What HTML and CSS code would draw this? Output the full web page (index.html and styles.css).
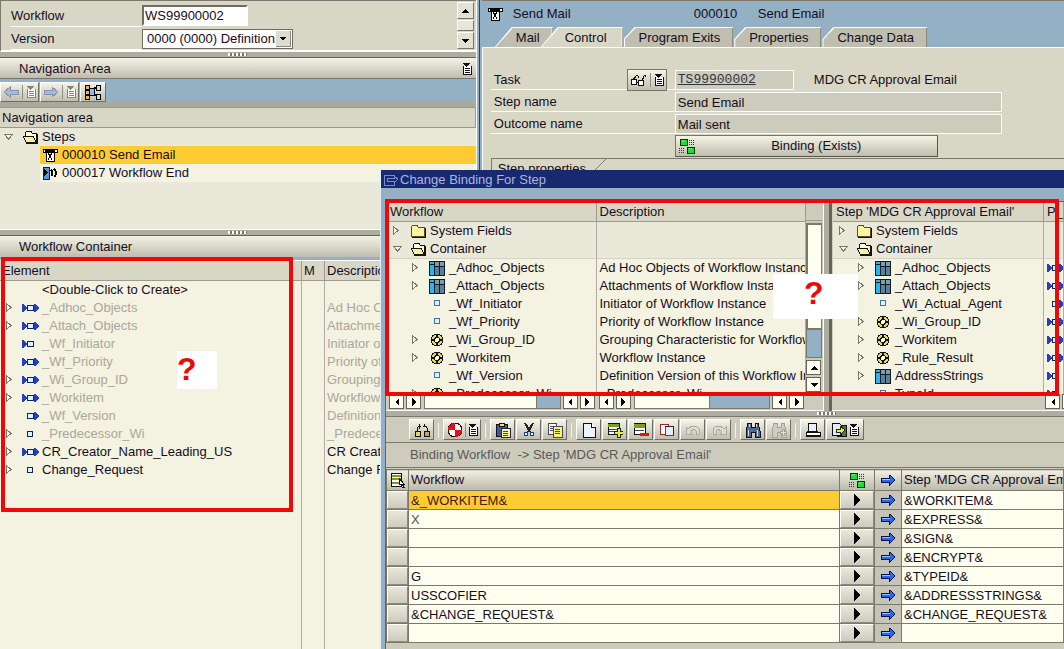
FILE: index.html
```html
<!DOCTYPE html>
<html lang="en">
<head>
<meta charset="utf-8">
<title>Change Binding For Step</title>
<link rel="stylesheet" href="styles.css">
</head>
<body>
<svg class="sprite" aria-hidden="true">
  <symbol id="right" viewBox="0 0 8 12"><path d="M1 1v9L6 5.500z" fill="#f7f6e6" stroke="#77776b"/></symbol>
  <symbol id="down" viewBox="0 0 12 12"><path d="M1 3h9L5.500 8z" fill="#f7f6e6" stroke="#77776b"/></symbol>
  <symbol id="folder" viewBox="0 0 16 14"><path d="M1 12V3l2-2h4l1 2h6v9z" fill="#fdf3a0" stroke="#55502a"/><path d="M2 13h13V4" fill="none" stroke="#111" /></symbol>
  <symbol id="open" viewBox="0 0 16 14"><path d="M3 6V3l2-2h4l1 2h4v9" fill="#fffde0" stroke="#111"/><path d="M1 6h10l3 6H4z" fill="#fdf090" stroke="#111"/><path d="M4 13h11V4" fill="none" stroke="#111"/></symbol>
  <symbol id="mail" viewBox="0 0 16 14"><path d="M1 1h14v3H1z" fill="#fff" stroke="#000"/><path d="M3 3h10" stroke="#000" stroke-width="2"/><path d="M4 4h8v9H4z" fill="#fff" stroke="#000"/><path d="M6 5l2 3 2-3M6 12l2-4 2 4" fill="none" stroke="#000"/></symbol>
  <symbol id="end" viewBox="0 0 16 14"><path d="M1 1h6v12H1z" fill="#5a93e0" stroke="#123"/><path d="M2 3v7l4-3z" fill="#000"/><path d="M9 4q3 3 0 6M12 3q4 4 0 8" fill="none" stroke="#000" stroke-width="2"/></symbol>
  <symbol id="grid" viewBox="0 0 16 15"><path d="M0 0h16v15H0z" fill="#0a1c26"/><path d="M1 1h4v2H1zM1 4h4v10H1z" fill="#2bb5ef"/><path d="M6 1h4v4H6zM11 1h4v4h-4z" fill="#7d9cae"/><path d="M6 6h4v8H6zM11 6h4v8h-4z" fill="#5f7f92"/></symbol>
  <symbol id="wheel" viewBox="0 0 14 14"><circle cx="7" cy="7" r="6" fill="#e9df4d" stroke="#111"/><path d="M7 1v12M1 7h12" stroke="#111" stroke-width="2"/><circle cx="7" cy="7" r="3" fill="#111"/><circle cx="7" cy="7" r="2" fill="#fff"/></symbol>
  <symbol id="sq" viewBox="0 0 16 14"><path d="M5 3h5v5H5z" fill="#e4f4ff" stroke="#3a72b8"/></symbol>
  <symbol id="io" viewBox="0 0 17 10"><path d="M0 1h1l4 4-4 4H0zM12 1h1l4 4-4 4h-1z" fill="#2a3cc0"/><path d="M5 2h7v6H5z" fill="#10264a"/><path d="M6 3h5v4H6z" fill="#d9f4ff"/></symbol>
  <symbol id="in" viewBox="0 0 17 10"><path d="M0 1h1l4 4-4 4H0z" fill="#2a3cc0"/><path d="M5 2h7v6H5z" fill="#10264a"/><path d="M6 3h5v4H6z" fill="#d9f4ff"/></symbol>
  <symbol id="out" viewBox="0 0 17 10"><path d="M12 1h1l4 4-4 4h-1z" fill="#2a3cc0"/><path d="M5 2h7v6H5z" fill="#10264a"/><path d="M6 3h5v4H6z" fill="#d9f4ff"/></symbol>
  <symbol id="none" viewBox="0 0 17 10"><path d="M5 2h6v6H5z" fill="#10264a"/><path d="M6 3h4v4H6z" fill="#d9f4ff"/></symbol>
  <symbol id="list" viewBox="0 0 10 12"><path d="M1 3v8h8V3" fill="#fff" stroke="currentColor"/><path d="M0 0h8L4 4zM3 5h5v1H3zM3 7h5v1H3zM3 9h5v1H3z" fill="currentColor"/></symbol>
  <symbol id="back" viewBox="0 0 16 12"><path d="M1 6l6-5v3h8v4H7v3z" fill="#a9b9d6" stroke="#8592b3"/></symbol>
  <symbol id="fwd" viewBox="0 0 16 12"><path d="M15 6L9 1v3H1v4h8v3z" fill="#a9b9d6" stroke="#8592b3"/></symbol>
  <symbol id="tree" viewBox="0 0 18 16"><path d="M1 1h4v4H1zM1 6h4v4H1zM1 11h4v4H1z" fill="#e9b84b" stroke="#000"/><path d="M5 4h5v7H5z" fill="#93b8ee" stroke="#000"/><path d="M10 4h2M10 11h2" stroke="#000" stroke-width="2"/><path d="M12 1h4v5h-4zM12 10h4v5h-4z" fill="#c9daf5" stroke="#000"/></symbol>
  <symbol id="glasses" viewBox="0 0 17 14"><path d="M2 8l5-6 1 1v2M12 8l2-5 1-1 1 2" fill="none" stroke="#111"/><circle cx="4" cy="9" r="3" fill="#fff" stroke="#111"/><circle cx="11" cy="10" r="3" fill="#fff" stroke="#111"/><path d="M7 9h1" stroke="#111"/></symbol>
  <symbol id="bind" viewBox="0 0 16 16"><path d="M1 1h7v6H1zM8 9h7v6H8z" fill="#19df35" stroke="#06370c"/><path d="M3 2l1 2 2-2M10 10l1 2 2-2" fill="none" stroke="#5cf56c"/><path d="M10 2h6M10 4h6M10 6h6M0 10h6M0 12h6M0 14h6" stroke="#333" stroke-dasharray="1 1"/></symbol>
  <symbol id="dlg" viewBox="0 0 16 12"><path d="M11 9v2H1V1h10v2M4 4h7V2l4 3-4 4V7H4z" fill="none" stroke="#7789cf"/></symbol>
  <symbol id="arrow" viewBox="0 0 16 12"><path d="M1 4h8V1h1l5 5-5 5H9V8H1z" fill="#2468ee" stroke="#04103f"/><path d="M2 5h8" stroke="#8fc8ff"/></symbol>
  <symbol id="link" viewBox="0 0 16 16"><path d="M1 9h5v5H1z" fill="#f0d060" stroke="#111"/><path d="M10 9h5v5h-5z" fill="#b8ab5c" stroke="#111"/><path d="M3 9V6l2-2h2M9 4h3l1 2v3M5 2v5M10 2v3" fill="none" stroke="#111"/></symbol>
  <symbol id="check" viewBox="0 0 16 16"><circle cx="8" cy="8" r="7" fill="#fff" stroke="#400"/><path d="M8 8V1a7 7 0 0 0-7 7zM8 8v7a7 7 0 0 0 7-7z" fill="#e0101c"/></symbol>
  <symbol id="paste" viewBox="0 0 16 16"><path d="M1 2h11v12H1z" fill="#3c5aa8" stroke="#111"/><path d="M4 1h5v3H4z" fill="#f3e36a" stroke="#111"/><path d="M6 6h9v9H6z" fill="#fbf49a" stroke="#224"/><path d="M8 9h5M8 11h5M8 13h5" stroke="#445"/></symbol>
  <symbol id="cut" viewBox="0 0 14 16"><path d="M3 1l5 9M11 1L6 10" stroke="#222" stroke-width="2"/><circle cx="4" cy="12" r="2" fill="#dfe" stroke="#1e3d9b"/><circle cx="10" cy="12" r="2" fill="#dfe" stroke="#1e3d9b"/></symbol>
  <symbol id="copy" viewBox="0 0 16 16"><path d="M1 1h8v11H1z" fill="#fffbd0" stroke="#446"/><path d="M3 4h3M3 6h3M3 8h3" stroke="#446"/><path d="M6 4h9v11H6z" fill="#fbf16a" stroke="#446"/><path d="M8 7h5M8 9h5M8 11h5" stroke="#446"/></symbol>
  <symbol id="page" viewBox="0 0 14 16"><path d="M1 1h8l4 4v10H1z" fill="#eaf3ff" stroke="#111"/><path d="M9 1v4h4" fill="#fff" stroke="#111"/></symbol>
  <symbol id="ins" viewBox="0 0 16 16"><path d="M1 1h11v11H1z" fill="#fff" stroke="#111"/><path d="M1 2h11v3H1z" fill="#7a9e26"/><path d="M2 7h9M2 9h9" stroke="#345"/><path d="M10 6h3v3h3v3h-3v3h-3v-3H7V9h3z" fill="#e8ee3c" stroke="#222"/></symbol>
  <symbol id="del" viewBox="0 0 16 16"><path d="M1 1h11v11H1z" fill="#fff" stroke="#111"/><path d="M1 2h11v4H1z" fill="#7a9e26"/><path d="M2 8h9" stroke="#345"/><path d="M7 11h9v3H7z" fill="#e01515"/></symbol>
  <symbol id="dup" viewBox="0 0 16 16"><path d="M1 2h8v10H1z" fill="#fff" stroke="#a22"/><path d="M6 4h8v9H6z" fill="#e7ecfb" stroke="#a22"/><path d="M6 4h8v9" fill="none" stroke="#223"/></symbol>
  <symbol id="undo" viewBox="0 0 16 14"><path d="M1 11V4l2 2q6-6 11 0v5l-3 1V8q-3-3-6 1l2 2z" fill="#dddccf" stroke="#a9a899"/></symbol>
  <symbol id="redo" viewBox="0 0 16 14"><path d="M15 11V4l-2 2Q7 0 2 6v5l3 1V8q3-3 6 1l-2 2z" fill="#dddccf" stroke="#a9a899"/></symbol>
  <symbol id="find" viewBox="0 0 16 16"><path d="M3 1h3v4h4V1h3l2 8v6h-5v-5H6v5H1V9z" fill="#52688f" stroke="#111"/><path d="M3 8v6M12 8v6M4 2v3M11 2v3" stroke="#c6d3ea"/></symbol>
  <symbol id="next" viewBox="0 0 16 16"><path d="M3 1h3v4h4V1h3l2 8v6h-5v-5H6v5H1V9z" fill="#cfcec2" stroke="#a3a294"/><path d="M11 7h2v2h2v2h-2v2h-2v-2H9V9h2z" fill="#e6e5d8" stroke="#a3a294"/></symbol>
  <symbol id="print" viewBox="0 0 16 16"><path d="M4 1h7l1 8H3z" fill="#e6efff" stroke="#111"/><path d="M1 10h14v4H1z" fill="#fff" stroke="#111"/><path d="M1 14h14" stroke="#111" stroke-width="2"/></symbol>
  <symbol id="export" viewBox="0 0 16 16"><path d="M6 3h9v11H6z" fill="#447a36" stroke="#111"/><path d="M1 1h7l2 2v10H1z" fill="#dfeaff" stroke="#111"/><path d="M5 7h4V4l5 4-5 5v-3H5z" fill="#f2ee3a" stroke="#222"/></symbol>
  <symbol id="sel" viewBox="0 0 16 16"><path d="M1 1h10v13H1z" fill="#fff" stroke="#111"/><path d="M2 3h9v2H2zM2 6h9v2H2zM2 10h9v2H2z" fill="#7d9a25"/><path d="M9 6l5 6h-2l2 3h-2l-1-3-2 1z" fill="#fff" stroke="#111"/></symbol>
  <symbol id="tl" viewBox="0 0 6 8"><path d="M5 0v8L1 4z"/></symbol>
  <symbol id="tr" viewBox="0 0 6 8"><path d="M1 0v8l4-4z"/></symbol>
  <symbol id="play" viewBox="0 0 6 12"><path d="M0 0v12l6-6z"/></symbol>
  <symbol id="tu" viewBox="0 0 8 6"><path d="M0 5h8L4 1z"/></symbol>
  <symbol id="td" viewBox="0 0 8 6"><path d="M0 1h8L4 5z"/></symbol>
</svg>

<div class="app">
  <aside class="left">
    <section class="head">
      <form class="headform">
        <label class="lab" for="wf">Workflow</label><input class="wf" id="wf" value="WS99900002">
        <label class="lab" for="ver">Version</label>
        <span class="selectbox"><select class="ver" id="ver"><option>0000 (0000) Definition</option></select><svg class="selarrow" width="8" height="6"><use href="#td"/></svg></span>
      </form>
      <div class="headscroll">
        <button class="sb" aria-label="Scroll up"><svg width="8" height="6"><use href="#tu"/></svg></button>
        <span class="knob"></span>
        <button class="sb" aria-label="Scroll down"><svg width="8" height="6"><use href="#td"/></svg></button>
      </div>
    </section>
    <div class="split"><i class="dots"></i></div>
    <h2 class="bar">Navigation Area<svg width="10" height="12"><use href="#list"/></svg></h2>
    <div class="navtools">
      <button class="tb dim" aria-label="Back"><svg width="16" height="12"><use href="#back"/></svg><i class="vr"></i><svg width="10" height="12"><use href="#list"/></svg></button>
      <button class="tb dim" aria-label="Forward"><svg width="16" height="12"><use href="#fwd"/></svg><i class="vr"></i><svg width="10" height="12"><use href="#list"/></svg></button>
      <button class="tb sq" aria-label="Hierarchy"><svg width="18" height="16"><use href="#tree"/></svg></button>
    </div>
    <section class="nav">
      <div class="navhead">Navigation area</div>
      <div class="cell top"><button class="exp" aria-label="Collapse"><svg width="12" height="12"><use href="#down"/></svg></button><svg width="16" height="14"><use href="#open"/></svg>Steps</div>
      <div class="cell step on"><svg width="16" height="14"><use href="#mail"/></svg>000010 Send Email</div>
      <div class="cell step"><svg width="16" height="14"><use href="#end"/></svg>000017 Workflow End</div>
    </section>
    <div class="split"><i class="dots"></i></div>
    <h2 class="bar cont">Workflow Container</h2>
    <section class="container">
      <table class="tree elements">
        <colgroup><col class="c-el"><col class="c-m"><col></colgroup>
        <thead><tr><th>Element</th><th>M</th><th>Description</th></tr></thead>
        <tbody>
        <tr><td><div class="cell"><i class="exp"></i><i class="gap"></i>&lt;Double-Click to Create&gt;</div></td><td></td><td></td></tr>
        <tr class="off"><td><div class="cell"><button class="exp" aria-label="Expand"><svg width="8" height="12"><use href="#right"/></svg></button><svg width="17" height="10"><use href="#io"/></svg>_Adhoc_Objects</div></td><td></td><td>Ad Hoc Objects of Workflow Instance</td></tr>
        <tr class="off"><td><div class="cell"><button class="exp" aria-label="Expand"><svg width="8" height="12"><use href="#right"/></svg></button><svg width="17" height="10"><use href="#io"/></svg>_Attach_Objects</div></td><td></td><td>Attachments of Workflow Instance</td></tr>
        <tr class="off"><td><div class="cell"><i class="exp"></i><svg width="17" height="10"><use href="#in"/></svg>_Wf_Initiator</div></td><td></td><td>Initiator of Workflow Instance</td></tr>
        <tr class="off"><td><div class="cell"><i class="exp"></i><svg width="17" height="10"><use href="#io"/></svg>_Wf_Priority</div></td><td></td><td>Priority of Workflow Instance</td></tr>
        <tr class="off"><td><div class="cell"><button class="exp" aria-label="Expand"><svg width="8" height="12"><use href="#right"/></svg></button><svg width="17" height="10"><use href="#io"/></svg>_Wi_Group_ID</div></td><td></td><td>Grouping Characteristic for Workflow</td></tr>
        <tr class="off"><td><div class="cell"><button class="exp" aria-label="Expand"><svg width="8" height="12"><use href="#right"/></svg></button><svg width="17" height="10"><use href="#io"/></svg>_Workitem</div></td><td></td><td>Workflow Instance</td></tr>
        <tr class="off"><td><div class="cell"><i class="exp"></i><svg width="17" height="10"><use href="#out"/></svg>_Wf_Version</div></td><td></td><td>Definition Version of this Workflow</td></tr>
        <tr class="off"><td><div class="cell"><button class="exp" aria-label="Expand"><svg width="8" height="12"><use href="#right"/></svg></button><svg width="17" height="10"><use href="#none"/></svg>_Predecessor_Wi</div></td><td></td><td>_Predecessor_Wi</td></tr>
        <tr><td><div class="cell"><button class="exp" aria-label="Expand"><svg width="8" height="12"><use href="#right"/></svg></button><svg width="17" height="10"><use href="#io"/></svg>CR_Creator_Name_Leading_US</div></td><td></td><td>CR Creator</td></tr>
        <tr><td><div class="cell"><button class="exp" aria-label="Expand"><svg width="8" height="12"><use href="#right"/></svg></button><svg width="17" height="10"><use href="#none"/></svg>Change_Request</div></td><td></td><td>Change Request</td></tr>
        <tr class="fill"><td></td><td></td><td></td></tr>
        </tbody>
      </table>
    </section>
  </aside>

  <main class="right">
    <header class="stephead"><svg width="16" height="14"><use href="#mail"/></svg><span class="kind">Send Mail</span><span class="num">000010</span><span>Send Email</span></header>
    <nav class="tabs">
      <button class="tab first">Mail</button><button class="tab cur">Control</button><button class="tab">Program Exits</button><button class="tab">Properties</button><button class="tab">Change Data</button>
    </nav>
    <section class="panel">
      <div class="line"><div class="lab task"><span>Task</span><button class="tb look" aria-label="Display task"><svg width="17" height="14"><use href="#glasses"/></svg><i class="vr"></i><svg width="10" height="12"><use href="#list"/></svg></button></div><a class="field id" href="#">TS99900002</a><span class="note">MDG CR Approval Email</span></div>
      <div class="line"><label class="lab" for="sn">Step name</label><input class="field" id="sn" value="Send Email" readonly></div>
      <div class="line"><label class="lab" for="on">Outcome name</label><input class="field" id="on" value="Mail sent" readonly></div>
      <div class="line"><span class="lab bare"></span><button class="binding"><svg width="16" height="16"><use href="#bind"/></svg><span>Binding (Exists)</span></button></div>
      <div class="group"><span class="legend">Step properties</span></div>
    </section>
  </main>

  <div class="dialog" role="dialog" aria-labelledby="dt">
    <h1 class="title" id="dt"><svg width="16" height="12"><use href="#dlg"/></svg>Change Binding For Step</h1>
    <div class="dbody">
      <div class="panes">
        <section class="pane">
          <div class="view">
            <table class="tree">
              <thead><tr><th>Workflow</th><th>Description</th></tr></thead>
              <tbody>
              <tr class="root"><td><div class="cell"><button class="exp" aria-label="Expand"><svg width="8" height="12"><use href="#right"/></svg></button><svg width="16" height="14"><use href="#folder"/></svg>System Fields</div></td><td></td></tr>
              <tr class="root last"><td><div class="cell"><button class="exp" aria-label="Collapse"><svg width="12" height="12"><use href="#down"/></svg></button><svg width="16" height="14"><use href="#open"/></svg>Container</div></td><td></td></tr>
              <tr><td><div class="cell kid"><button class="exp" aria-label="Expand"><svg width="8" height="12"><use href="#right"/></svg></button><svg width="16" height="15"><use href="#grid"/></svg>_Adhoc_Objects</div></td><td>Ad Hoc Objects of Workflow Instance</td></tr>
              <tr><td><div class="cell kid"><button class="exp" aria-label="Expand"><svg width="8" height="12"><use href="#right"/></svg></button><svg width="16" height="15"><use href="#grid"/></svg>_Attach_Objects</div></td><td>Attachments of Workflow Instance</td></tr>
              <tr><td><div class="cell kid"><i class="exp"></i><svg width="16" height="14"><use href="#sq"/></svg>_Wf_Initiator</div></td><td>Initiator of Workflow Instance</td></tr>
              <tr><td><div class="cell kid"><i class="exp"></i><svg width="16" height="14"><use href="#sq"/></svg>_Wf_Priority</div></td><td>Priority of Workflow Instance</td></tr>
              <tr><td><div class="cell kid"><button class="exp" aria-label="Expand"><svg width="8" height="12"><use href="#right"/></svg></button><svg width="16" height="14"><use href="#wheel"/></svg>_Wi_Group_ID</div></td><td>Grouping Characteristic for Workflow</td></tr>
              <tr><td><div class="cell kid"><button class="exp" aria-label="Expand"><svg width="8" height="12"><use href="#right"/></svg></button><svg width="16" height="14"><use href="#wheel"/></svg>_Workitem</div></td><td>Workflow Instance</td></tr>
              <tr><td><div class="cell kid"><i class="exp"></i><svg width="16" height="14"><use href="#sq"/></svg>_Wf_Version</div></td><td>Definition Version of this Workflow Instance</td></tr>
              <tr><td><div class="cell kid"><button class="exp" aria-label="Expand"><svg width="8" height="12"><use href="#right"/></svg></button><svg width="16" height="14"><use href="#wheel"/></svg>_Predecessor_Wi</div></td><td>_Predecessor_Wi</td></tr>
              </tbody>
            </table>
          </div>
          <div class="vs"><span class="corner"></span><span class="vthumb"></span><span class="vtrack"></span>
            <button class="ab" aria-label="Scroll up"><svg width="8" height="6"><use href="#tu"/></svg></button><button class="ab" aria-label="Scroll down"><svg width="8" height="6"><use href="#td"/></svg></button></div>
          <div class="hs">
            <div class="hbar"><button class="ab" aria-label="Left"><svg width="6" height="8"><use href="#tl"/></svg></button><button class="ab" aria-label="Right"><svg width="6" height="8"><use href="#tr"/></svg></button><span class="track"><i class="thumb wide"></i></span><button class="ab" aria-label="Left"><svg width="6" height="8"><use href="#tl"/></svg></button><button class="ab" aria-label="Right"><svg width="6" height="8"><use href="#tr"/></svg></button></div>
            <div class="hbar"><button class="ab" aria-label="Left"><svg width="6" height="8"><use href="#tl"/></svg></button><button class="ab" aria-label="Right"><svg width="6" height="8"><use href="#tr"/></svg></button><span class="track"><i class="thumb"></i></span><button class="ab" aria-label="Left"><svg width="6" height="8"><use href="#tl"/></svg></button><button class="ab" aria-label="Right"><svg width="6" height="8"><use href="#tr"/></svg></button></div>
          </div>
        </section>
        <div class="vsplit"></div>
        <section class="pane target">
          <div class="view">
            <table class="tree">
              <colgroup><col class="c-step"><col></colgroup>
              <thead><tr><th>Step 'MDG CR Approval Email'</th><th>P_</th></tr></thead>
              <tbody>
              <tr class="root"><td><div class="cell"><button class="exp" aria-label="Expand"><svg width="8" height="12"><use href="#right"/></svg></button><svg width="16" height="14"><use href="#folder"/></svg>System Fields</div></td><td></td></tr>
              <tr class="root last"><td><div class="cell"><button class="exp" aria-label="Collapse"><svg width="12" height="12"><use href="#down"/></svg></button><svg width="16" height="14"><use href="#open"/></svg>Container</div></td><td></td></tr>
              <tr><td><div class="cell kid"><button class="exp" aria-label="Expand"><svg width="8" height="12"><use href="#right"/></svg></button><svg width="16" height="15"><use href="#grid"/></svg>_Adhoc_Objects</div></td><td class="p"><svg width="17" height="10"><use href="#io"/></svg></td></tr>
              <tr><td><div class="cell kid"><button class="exp" aria-label="Expand"><svg width="8" height="12"><use href="#right"/></svg></button><svg width="16" height="15"><use href="#grid"/></svg>_Attach_Objects</div></td><td class="p"><svg width="17" height="10"><use href="#io"/></svg></td></tr>
              <tr><td><div class="cell kid"><i class="exp"></i><svg width="16" height="14"><use href="#sq"/></svg>_Wi_Actual_Agent</div></td><td class="p"><svg width="17" height="10"><use href="#out"/></svg></td></tr>
              <tr><td><div class="cell kid"><button class="exp" aria-label="Expand"><svg width="8" height="12"><use href="#right"/></svg></button><svg width="16" height="14"><use href="#wheel"/></svg>_Wi_Group_ID</div></td><td class="p"><svg width="17" height="10"><use href="#io"/></svg></td></tr>
              <tr><td><div class="cell kid"><button class="exp" aria-label="Expand"><svg width="8" height="12"><use href="#right"/></svg></button><svg width="16" height="14"><use href="#wheel"/></svg>_Workitem</div></td><td class="p"><svg width="17" height="10"><use href="#io"/></svg></td></tr>
              <tr><td><div class="cell kid"><button class="exp" aria-label="Expand"><svg width="8" height="12"><use href="#right"/></svg></button><svg width="16" height="14"><use href="#wheel"/></svg>_Rule_Result</div></td><td class="p"><svg width="17" height="10"><use href="#io"/></svg></td></tr>
              <tr><td><div class="cell kid"><button class="exp" aria-label="Expand"><svg width="8" height="12"><use href="#right"/></svg></button><svg width="16" height="15"><use href="#grid"/></svg>AddressStrings</div></td><td class="p"><svg width="17" height="10"><use href="#in"/></svg></td></tr>
              <tr><td><div class="cell kid"><i class="exp"></i><svg width="16" height="14"><use href="#sq"/></svg>TypeId</div></td><td class="p"><svg width="17" height="10"><use href="#in"/></svg></td></tr>
              </tbody>
            </table>
          </div>
          <div class="hs one"><div class="hbar"><button class="ab" aria-label="Left"><svg width="6" height="8"><use href="#tl"/></svg></button><button class="ab" aria-label="Right"><svg width="6" height="8"><use href="#tr"/></svg></button></div></div>
        </section>
      </div>
      <div class="split low"><i class="dots"></i></div>
      <div class="tools">
        <button class="tb" aria-label="Generate binding"><svg width="16" height="16"><use href="#link"/></svg></button><i class="sep"></i>
        <button class="tb two" aria-label="Check"><svg width="16" height="16"><use href="#check"/></svg><i class="vr"></i><svg width="10" height="12"><use href="#list"/></svg></button><i class="sep"></i>
        <button class="tb" aria-label="Paste"><svg width="16" height="16"><use href="#paste"/></svg></button>
        <button class="tb" aria-label="Cut"><svg width="14" height="16"><use href="#cut"/></svg></button>
        <button class="tb" aria-label="Copy"><svg width="16" height="16"><use href="#copy"/></svg></button><i class="sep"></i>
        <button class="tb" aria-label="New"><svg width="14" height="16"><use href="#page"/></svg></button>
        <button class="tb" aria-label="Insert row"><svg width="16" height="16"><use href="#ins"/></svg></button>
        <button class="tb" aria-label="Delete row"><svg width="16" height="16"><use href="#del"/></svg></button>
        <button class="tb" aria-label="Duplicate row"><svg width="16" height="16"><use href="#dup"/></svg></button>
        <button class="tb" aria-label="Undo"><svg width="16" height="14"><use href="#undo"/></svg></button>
        <button class="tb" aria-label="Redo"><svg width="16" height="14"><use href="#redo"/></svg></button><i class="sep"></i>
        <button class="tb" aria-label="Find"><svg width="16" height="16"><use href="#find"/></svg></button>
        <button class="tb" aria-label="Find next"><svg width="16" height="16"><use href="#next"/></svg></button><i class="sep"></i>
        <button class="tb" aria-label="Print"><svg width="16" height="16"><use href="#print"/></svg></button>
        <button class="tb two" aria-label="Export"><svg width="16" height="16"><use href="#export"/></svg><svg width="10" height="12"><use href="#list"/></svg></button>
      </div>
      <h2 class="caption">Binding Workflow&nbsp; -&gt; Step 'MDG CR Approval Email'</h2>
      <table class="bindings">
        <colgroup><col class="b-sel"><col><col class="b-btn"><col class="b-dir"><col class="b-step"></colgroup>
        <thead><tr><th class="ic"><svg width="16" height="16"><use href="#sel"/></svg></th><th>Workflow</th><th class="ic"><svg width="16" height="16"><use href="#bind"/></svg></th><th class="ic"><svg width="16" height="12"><use href="#arrow"/></svg></th><th>Step 'MDG CR Approval Email'</th></tr></thead>
        <tbody>
        <tr class="on"><td><button class="rb" aria-label="Select row"></button></td><td>&amp;_WORKITEM&amp;</td><td><button class="rb" aria-label="Edit"><svg width="6" height="12"><use href="#play"/></svg></button></td><td class="dir"><svg width="16" height="12"><use href="#arrow"/></svg></td><td>&amp;WORKITEM&amp;</td></tr>
        <tr><td><button class="rb" aria-label="Select row"></button></td><td class="grey">X</td><td><button class="rb" aria-label="Edit"><svg width="6" height="12"><use href="#play"/></svg></button></td><td class="dir"><svg width="16" height="12"><use href="#arrow"/></svg></td><td>&amp;EXPRESS&amp;</td></tr>
        <tr><td><button class="rb" aria-label="Select row"></button></td><td></td><td><button class="rb" aria-label="Edit"><svg width="6" height="12"><use href="#play"/></svg></button></td><td class="dir"><svg width="16" height="12"><use href="#arrow"/></svg></td><td>&amp;SIGN&amp;</td></tr>
        <tr><td><button class="rb" aria-label="Select row"></button></td><td></td><td><button class="rb" aria-label="Edit"><svg width="6" height="12"><use href="#play"/></svg></button></td><td class="dir"><svg width="16" height="12"><use href="#arrow"/></svg></td><td>&amp;ENCRYPT&amp;</td></tr>
        <tr><td><button class="rb" aria-label="Select row"></button></td><td>G</td><td><button class="rb" aria-label="Edit"><svg width="6" height="12"><use href="#play"/></svg></button></td><td class="dir"><svg width="16" height="12"><use href="#arrow"/></svg></td><td>&amp;TYPEID&amp;</td></tr>
        <tr><td><button class="rb" aria-label="Select row"></button></td><td>USSCOFIER</td><td><button class="rb" aria-label="Edit"><svg width="6" height="12"><use href="#play"/></svg></button></td><td class="dir"><svg width="16" height="12"><use href="#arrow"/></svg></td><td>&amp;ADDRESSSTRINGS&amp;</td></tr>
        <tr><td><button class="rb" aria-label="Select row"></button></td><td>&amp;CHANGE_REQUEST&amp;</td><td><button class="rb" aria-label="Edit"><svg width="6" height="12"><use href="#play"/></svg></button></td><td class="dir"><svg width="16" height="12"><use href="#arrow"/></svg></td><td>&amp;CHANGE_REQUEST&amp;</td></tr>
        <tr><td><button class="rb" aria-label="Select row"></button></td><td></td><td><button class="rb" aria-label="Edit"><svg width="6" height="12"><use href="#play"/></svg></button></td><td class="dir"><svg width="16" height="12"><use href="#arrow"/></svg></td><td></td></tr>
        </tbody>
      </table>
    </div>
    <div class="mark mark-trees"></div>
    <div class="ask ask-trees">?</div>
  </div>
  <div class="mark mark-elements"></div>
  <div class="ask ask-elements">?</div>
</div>
</body>
</html>
```
FILE: styles.css
```css
:root {
  --blue: #94b0c4;
  --panel: #d8d7c6;
  --gray: #cccbbc;
  --cream: #f4f2e0;
  --root: #eae9d9;
  --edge: #7a796c;
  --hot: #ffcb33;
  --raised: linear-gradient(#f4f4e8, #d9d8ca 50%, #bfbeaf);
}
* { box-sizing: border-box; }
body, button, input, select { font: 13px/18px "Liberation Sans", Arial, sans-serif; color: #150d1c; }
body { margin: 0; background: var(--blue); overflow: hidden; }
h1, h2 { margin: 0; font: inherit; }
button { padding: 0; border: 0; background: none; }
svg { flex: none; display: block; shape-rendering: crispEdges; }
.sprite { position: absolute; width: 0; height: 0; }
.app { position: relative; display: grid; grid-template-columns: 45% minmax(0, 1fr); height: 100vh; overflow: hidden; }

.left { display: flex; flex-direction: column; min-width: 0; min-height: 0; margin-right: 2px; border-right: 1px solid #fff; background: #aeada0; }
.head { display: flex; flex: none; height: 52px; border: 1px solid var(--edge); border-right: 0; border-bottom: 2px solid #fff; background: var(--panel); }
.headform { display: grid; grid-template-columns: 131px auto; grid-template-rows: 24px 23px; padding: 2px 0 0 10px; flex: 1; justify-content: start; align-items: center; }
.headform .lab { border-bottom: 1px solid #fff; height: 23px; line-height: 24px; }
.wf { width: 106px; height: 21px; padding: 0 1px; border: 2px solid; border-color: #6d6c60 #fff #fff #6d6c60; background: #fff; }
.selectbox { position: relative; width: 151px; }
.ver { appearance: none; display: block; width: 100%; height: 20px; padding: 0 4px; border: 1px solid #6d6c60; border-radius: 0; background: #fff; }
.selarrow { position: absolute; right: 2px; top: 2px; width: 15px; height: 16px; padding: 5px 3px; background: #dedccc; border: 0 solid #888; border-width: 0 1px 1px 0; }
.headscroll { width: 19px; display: flex; flex-direction: column; gap: 1px; padding-top: 1px; }
.sb { display: grid; place-items: center; width: 17px; height: 17px; background: #e3e1d2; border: 1px solid; border-color: #fff #77766a #77766a #fff; }
.knob { height: 11px; width: 17px; background: #e8e6d8; border: 1px solid; border-color: #fff #77766a #77766a #fff; }
.split { flex: none; height: 6px; background: #aeada0; border-bottom: 1px solid #66655a; display: flex; justify-content: center; }
.dots { width: 19px; height: 3px; margin-top: 1px; background: repeating-linear-gradient(90deg, #fff 0 2px, #77766a 2px 4px); }
.bar { flex: none; display: flex; justify-content: space-between; align-items: center; height: 21px; padding: 1px 4px 0 19px; border-bottom: 1px solid var(--edge); background: linear-gradient(#f3f2e6, #d9d8c9 50%, #bdbcae); }
.navtools { flex: none; display: flex; gap: 1px; height: 28px; padding: 3px 0 0; background: var(--blue); border-bottom: 5px solid #aaa99d; }
.tb { flex: none; display: flex; align-items: center; justify-content: center; gap: 3px; width: 25px; height: 21px; background: var(--raised); border: 1px solid; border-color: #fff #6f6e62 #6f6e62 #fff; }
.navtools .tb { width: 39px; height: 20px; }
.navtools .tb.sq { width: 26px; }
.dim { color: #85847a; }
.vr { width: 1px; height: 14px; background: #8f8e82; }
.nav { flex: none; height: 123px; background: var(--root); border-bottom: 1px solid #fff; }
.navhead { height: 21px; padding: 1px 2px; background: var(--panel); border: 1px solid #999889; border-left: 0; }
.cell { display: flex; align-items: center; gap: 3px; height: 18px; padding-left: 5px; white-space: nowrap; }
.exp { flex: none; display: block; width: 15px; height: 12px; }
.gap { width: 17px; }
.nav .top { padding-left: 3px; gap: 4px; }
.step { margin-left: 40px; padding-left: 2px; gap: 4px; background: var(--cream); }
.step.on { background: var(--hot); }
.bar.cont { border-bottom: 3px solid var(--blue); height: 24px; }
.container { flex: 1; min-height: 0; background: var(--cream); border-top: 1px solid #fff; }

.tree { width: 100%; table-layout: fixed; border-collapse: separate; border-spacing: 0; background: var(--cream); }
.tree th { height: 20px; padding: 0 3px; text-align: left; font-weight: 400; background: var(--panel); border-right: 1px solid #9c9b8d; border-bottom: 1px solid #9c9b8d; white-space: nowrap; overflow: hidden; }
.tree td { height: 18px; padding: 0 0 0 3px; border-right: 1px solid #b5a9a8; overflow: hidden; white-space: nowrap; }
.tree td:first-child { padding: 0; }
.elements { height: 100%; }
.elements th { padding: 0 2px; }
.elements td { padding-left: 2px; }
.elements .cell { padding-left: 5px; }
.elements .exp { width: 14px; }
.elements .fill td { height: auto; }
.elements .off { color: #aaa79c; }
.c-el { width: 302px; }
.c-m { width: 23px; }
.root td { background: var(--root); }
.root.last td { border-bottom: 1px solid #d4d3c2; }
.cell.kid { padding-left: 24px; }
.pane .cell { gap: 4px; }
.pane .exp { width: 14px; }

.right { min-width: 0; border-left: 1px solid #35424c; padding-left: 2px; }
.stephead { display: flex; align-items: center; height: 27px; padding-left: 5px; border-top: 1px solid var(--edge); }
.kind { width: 181px; margin-left: 10px; }
.num { width: 64px; }
.tabs { display: flex; gap: 1px; height: 20px; padding-left: 13px; }
.tab { --cut: 11px; position: relative; isolation: isolate; height: 20px; padding: 1px 13px 0 15px; background: #fff; clip-path: polygon(var(--cut) 0, 100% 0, 100% 100%, 0 100%, 0 var(--low, 60%)); }
.tab::before { content: ""; position: absolute; z-index: -1; inset: 1px 1px 0; background: #bfbeb0; clip-path: inherit; }
.tab::after { content: ""; position: absolute; top: 1px; right: 0; bottom: 0; width: 1px; background: #8b8a7d; }
.tab.first, .tab.cur { --cut: 17px; --low: 100%; padding-left: 21px; }
.tab.cur { margin-left: -13px; padding: 1px 16px 0 24px; }
.tab.cur::before { background: var(--panel); }
.panel { height: 100%; padding: 21px 0 0 8px; border-left: 1px solid #fff; border-top: 1px solid #fff; background: var(--panel); }
.line { display: flex; height: 22px; align-items: center; }
.line .lab { flex: none; width: 184px; height: 20px; padding-left: 3px; line-height: 20px; border-bottom: 1px solid #fff; }
.line .bare { border: 0; }
.line .task { display: flex; justify-content: space-between; align-items: center; padding-right: 8px; }
.look { width: 40px; height: 22px; border-color: #77766a; }
.field { width: 327px; max-width: 84%; height: 20px; padding: 0 2px; border: 1px solid #fff; border-radius: 0; background: var(--gray); }
.field.id { width: 119px; font-family: "Liberation Mono", monospace; color: #30363a; }
.note { margin-left: 20px; }
.binding { display: grid; grid-template-columns: 16px 1fr; gap: 4px; align-items: center; width: 263px; height: 22px; padding: 0 3px; background: var(--raised); border: 1px solid #77766a; border-color: #77766a #56554a #56554a #77766a; }
.group { height: 60px; margin-top: 1px; border-top: 1px solid var(--edge); border-left: 1px solid var(--edge); }
.legend { display: inline-block; width: 114px; padding: 1px 6px; background: linear-gradient(135deg, transparent 48%, var(--edge) 48%, var(--edge) 54%, transparent 54%) right top / 12px 12px no-repeat; }

.dialog { position: absolute; left: 380px; right: 0; top: 170px; bottom: 0; display: flex; flex-direction: column; background: var(--blue); border-left: 1px solid #e3edf3; }
.title { display: flex; align-items: center; gap: 1px; height: 18px; padding: 1px 0 0 2px; background: #18296f; color: #a9b6e2; }
.dbody { flex: 1; margin: 13px 0 0 4px; border-left: 1px solid #66655a; background: var(--gray); }
.panes { display: grid; grid-template-columns: minmax(0, 437fr) 9px minmax(0, 232fr); border-top: 1px solid #66655a; }
.pane { display: grid; grid-template-columns: minmax(0, 1fr) 17px; grid-template-rows: 192px 16px; padding-left: 1px; border-bottom: 1px solid #fff; }
.target { grid-template-columns: minmax(0, 1fr); }
.view { overflow: hidden; background: var(--cream); }
.c-step { width: 211px; }
.vsplit { background: linear-gradient(90deg, #fff 1px, #aeada0 1px 6px, #66655a 6px); }
.vs { display: flex; flex-direction: column; gap: 2px; padding-right: 1px; }
.corner { height: 19px; border-bottom: 1px solid #9c9b8d; }
.vthumb { flex: 1; margin-bottom: -2px; background: #fffff0; border: 1px solid var(--edge); border-width: 2px 1px 1px 2px; }
.vtrack { height: 29px; background: var(--blue); border: 1px solid var(--edge); }
.ab { flex: none; display: grid; place-items: center; width: 15px; height: 15px; background: #fffff0; border: 1px solid #66655a; }
.vs .ab:last-child { margin-bottom: 2px; }
.hs { display: grid; grid-template-columns: 1fr 1fr; }
.hs.one { grid-template-columns: 210px 1fr; }
.hs.one .hbar { grid-column: 2; }
.hbar { display: flex; gap: 2px; padding: 0 2px; overflow: hidden; }
.track { flex: 1; height: 15px; margin-left: 1px; background: var(--blue); border: 1px solid var(--edge); }
.thumb { display: block; width: 56%; height: 100%; background: #fffff0; border-right: 1px solid var(--edge); }
.thumb.wide { width: 83%; }
.split.low { padding-left: 202px; border-bottom-color: var(--edge); }
.tools { display: flex; gap: 1px; height: 26px; padding: 2px 0 0 23px; border-bottom: 1px solid var(--edge); }
.sep { width: 7px; height: 15px; margin-top: 4px; background: linear-gradient(#f4f3e8, #f4f3e8) 3px 0 / 1px 100% no-repeat; }
.tools .two { width: 38px; gap: 2px; }
.caption { height: 25px; padding: 3px 24px; color: #5b5a58; border-bottom: 1px solid var(--edge); white-space: nowrap; }
.bindings { width: 100%; margin-top: 1px; table-layout: fixed; border-collapse: collapse; background: #fffff0; }
.bindings th { height: 21px; padding: 0 2px; font-weight: 400; text-align: left; white-space: nowrap; overflow: hidden; background: linear-gradient(#f0efe2, #d3d2c4 50%, #bbbaac); border: 1px solid var(--edge); }
.bindings .ic { padding: 0; }
.bindings .ic svg, .dir svg { margin: auto; }
.bindings td { height: 19px; padding: 0 2px; line-height: 17px; border: 1px solid var(--edge); white-space: nowrap; }
.bindings td:nth-child(1), .bindings td:nth-child(3) { padding: 0; }
.bindings .on td:nth-child(2) { background: var(--hot); color: #40200a; }
.bindings .dir { background: #c5c4b7; padding: 0; }
.grey { color: #55534f; }
.b-sel { width: 22px; }
.b-btn { width: 35px; }
.b-dir { width: 27px; }
.b-step { width: 162px; }
.rb { display: grid; place-items: center; width: 100%; height: 18px; background: linear-gradient(#e8e7da, #cccbbd); border: 1px solid; border-color: #fff #8a897c #8a897c #fff; }

.mark { position: absolute; border: 4px solid #ee0808; pointer-events: none; }
.mark-elements { left: 1px; top: 257px; width: 292px; height: 255px; }
.mark-trees { left: 4px; right: 5px; top: 29px; height: 197px; }
.ask { position: absolute; background: #fff; color: #ee0808; font: bold 32px/36px "Liberation Sans", Arial, sans-serif; }
.ask-elements { left: 177px; top: 351px; width: 40px; height: 38px; }
.ask-trees { left: 392px; top: 104px; width: 85px; height: 45px; padding: 1px 0 0 31px; }
```
